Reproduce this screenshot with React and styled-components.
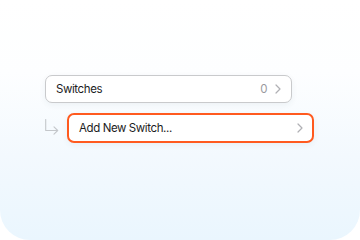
import React from 'react'
import styled, { createGlobalStyle } from 'styled-components'

const Global = createGlobalStyle`
  body {
    margin: 0;
    background: #ffffff;
    font-family: Inter, "Liberation Sans", sans-serif;
  }
`

const Panel = styled.div`
  width: 360px;
  height: 240px;
  box-sizing: border-box;
  border-radius: 0 0 30px 30px;
  background: linear-gradient(180deg, #ffffff 0%, #fdfeff 30%, #f3f9fe 65%, #eaf6fe 100%);
  padding: 75px 0 0 45px;
  display: flex;
  flex-direction: column;
  gap: 10px;
`

const Row = styled.div`
  display: flex;
  align-items: center;
  height: ${p => p.$h}px;
  width: ${p => p.$w}px;
  box-sizing: border-box;
  padding: 0 ${p => p.$pr}px 0 10px;
  background: #ffffff;
  border: ${p => p.$active ? '2px solid #ff5a1f' : '1px solid #c9cacc'};
  border-radius: 7px;
  box-shadow: 0 2px 6px rgba(30, 60, 90, 0.06);
  font-size: 11.5px;
  letter-spacing: -0.4px;
  color: #1c1c1e;
`

const Label = styled.span`
  flex: 1;
`

const Count = styled.span`
  color: #9a9a9e;
  margin-right: 8px;
`

const Nested = styled.div`
  display: flex;
  align-items: flex-start;
`

const Branch = styled.div`
  width: 22px;
  padding-top: 6px;
  display: flex;
`

const Chevron = () => (
  <svg width="6" height="10" viewBox="0 0 6 10" fill="none">
    <path d="M1 1l4 4-4 4" stroke="#b0b0b4" strokeWidth="1.2" strokeLinecap="round" strokeLinejoin="round" />
  </svg>
)

const CornerArrow = () => (
  <svg width="14" height="16" viewBox="0 0 14 16" fill="none">
    <path d="M0.7 0.5v11h12M9 7.8l3.7 3.7-3.7 3.7" stroke="#c4c7cb" strokeWidth="1.1" strokeLinecap="round" strokeLinejoin="round" />
  </svg>
)

export default function App() {
  return (
    <>
      <Global />
      <Panel>
        <Row $h={28} $w={247} $pr={10}>
          <Label>Switches</Label>
          <Count>0</Count>
          <Chevron />
        </Row>
        <Nested>
          <Branch>
            <CornerArrow />
          </Branch>
          <Row $active $h={30} $w={247} $pr={9}>
            <Label>Add New Switch...</Label>
            <Chevron />
          </Row>
        </Nested>
      </Panel>
    </>
  )
}
